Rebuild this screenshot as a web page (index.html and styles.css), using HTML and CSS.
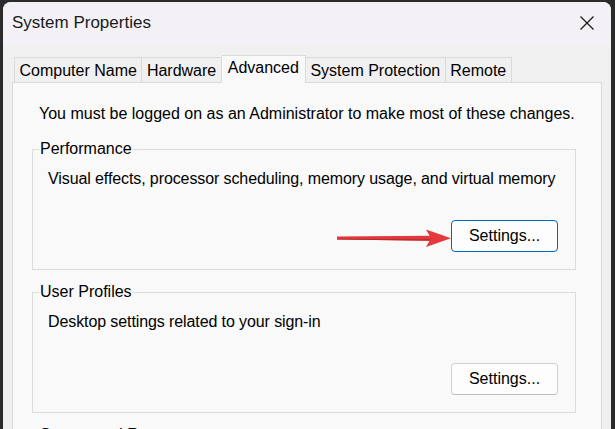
FILE: index.html
```html
<!DOCTYPE html>
<html lang="en">
<head>
<meta charset="utf-8">
<title>System Properties</title>
<link rel="stylesheet" href="styles.css">
</head>
<body>
<div class="window">
  <header class="titlebar">
    <span class="title">System Properties</span>
    <button class="close" aria-label="Close">
      <svg width="16" height="16" viewBox="0 0 16 16"><path d="M1.5 1.5 L14.5 14.5 M14.5 1.5 L1.5 14.5" stroke="#1b1b1b" stroke-width="1.3" fill="none"/></svg>
    </button>
  </header>
  <div class="content">
    <nav class="tabs">
      <div class="tab">Computer Name</div>
      <div class="tab">Hardware</div>
      <div class="tab active">Advanced</div>
      <div class="tab">System Protection</div>
      <div class="tab">Remote</div>
    </nav>
    <section class="panel">
      <p class="intro">You must be logged on as an Administrator to make most of these changes.</p>
      <fieldset class="group">
        <legend>Performance</legend>
        <p class="desc">Visual effects, processor scheduling, memory usage, and virtual memory</p>
        <div class="actions"><button class="btn primary">Settings...</button></div>
      </fieldset>
      <fieldset class="group">
        <legend>User Profiles</legend>
        <p class="desc">Desktop settings related to your sign-in</p>
        <div class="actions"><button class="btn">Settings...</button></div>
      </fieldset>
      <fieldset class="group">
        <legend>Startup and Recovery</legend>
        <p class="desc">System startup, system failure, and debugging information</p>
        <div class="actions"><button class="btn">Settings...</button></div>
      </fieldset>
      <svg class="arrow" width="116" height="20" viewBox="0 0 116 20">
        <polygon points="0,8.6 95,7.8 95,12.8 0,11.6" fill="#e0383b"/>
        <polygon points="0,10.8 95,11.2 95,12.8 0,11.6" fill="#b92a2c"/>
        <polygon points="89,1.5 114,10.2 89,19 94,10.2" fill="#e53a3d"/>
      </svg>
    </section>
  </div>
</div>
</body>
</html>
```

FILE: styles.css
```css
* { box-sizing: border-box; }

html, body {
  margin: 0;
  padding: 0;
  height: 100%;
  overflow: hidden;
}

body {
  background: #2b2b2b;
  font-family: "Liberation Sans", Arial, sans-serif;
  font-size: 16px;
  color: #000;
}

.window {
  margin: 2px 4px 0 3px;
  height: 440px;
  border-radius: 8px 8px 0 0;
  overflow: hidden;
  background: #f0f0f0;
}

.titlebar {
  height: 43px;
  background: #f3f1f6;
  display: flex;
  align-items: center;
  justify-content: space-between;
  padding: 0 16px 0 9px;
}

.title {
  font-size: 17px;
  color: #1a1a1a;
  margin-top: -1px;
}

.close {
  border: 0;
  background: transparent;
  padding: 0;
  width: 16px;
  height: 16px;
  display: flex;
  margin-top: -2px;
}

.content {
  padding: 10px 9px 0 9px;
}

.tabs {
  display: flex;
  align-items: flex-end;
  margin-left: 2px;
  position: relative;
  z-index: 1;
}

.tab {
  height: 25px;
  line-height: 25px;
  padding: 0 4.5px;
  border: 1px solid #dadada;
  border-bottom: 0;
  border-left: 0;
  background: #f0f0f0;
  white-space: nowrap;
  color: #000;
}

.tab:first-child {
  border-left: 1px solid #dadada;
}

.tab.active {
  height: 28px;
  line-height: 24px;
  margin-bottom: -1px;
  background: #f9f9f9;
  padding: 0 6px;
}

.panel {
  position: relative;
  background: #f9f9f9;
  border: 1px solid #dadada;
  padding: 22px 25px 0 19px;
  height: 400px;
}

.intro {
  margin: 0 0 17px 7px;
  line-height: 18px;
  white-space: nowrap;
}

.group {
  margin: 0 0 13px 0;
  padding: 12px 17px 17px 15px;
  border: 1px solid #dcdcdc;
  min-width: 0;
}

.group legend {
  margin-left: -9px;
  padding: 0 1px;
  line-height: 18px;
}

.desc {
  margin: 0;
  line-height: 18px;
  white-space: nowrap;
  letter-spacing: -0.1px;
}

.actions {
  display: flex;
  justify-content: flex-end;
  margin-top: 32px;
}

.btn {
  width: 107px;
  height: 32px;
  border: 1px solid #d0d0d0;
  border-bottom-color: #bdbdbd;
  border-radius: 4px;
  background: #fdfdfd;
  font-family: inherit;
  font-size: 16px;
  color: #000;
  padding: 0;
}

.btn.primary {
  border: 1px solid #0067c0;
}

.arrow {
  position: absolute;
  left: 324px;
  top: 145px;
}
```
